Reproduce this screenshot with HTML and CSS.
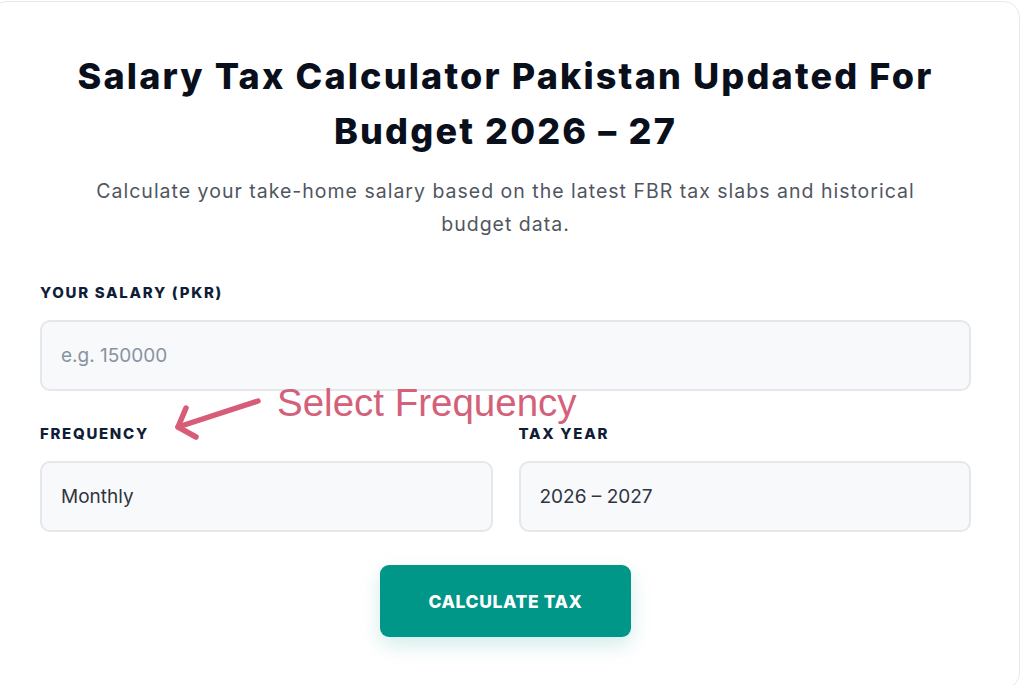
FILE: index.html
```html
<!DOCTYPE html>
<html lang="en">
<head>
<meta charset="utf-8">
<title>Salary Tax Calculator Pakistan</title>
<link rel="stylesheet" href="styles.css">
</head>
<body>
<main class="card">
  <h1 class="title">Salary Tax Calculator Pakistan Updated For Budget 2026 – 27</h1>
  <p class="subtitle">Calculate your take-home salary based on the latest FBR tax slabs and historical budget data.</p>

  <div class="field">
    <label class="label" for="salary">YOUR SALARY (PKR)</label>
    <input class="control" id="salary" type="text" placeholder="e.g. 150000">
  </div>

  <div class="row">
    <div class="field">
      <label class="label" for="freq">FREQUENCY</label>
      <select class="control" id="freq">
        <option>Monthly</option>
        <option>Yearly</option>
      </select>
    </div>
    <div class="field">
      <label class="label" for="year">TAX YEAR</label>
      <select class="control" id="year">
        <option>2026 – 2027</option>
      </select>
    </div>
    <svg class="arrow" width="95" height="50" viewBox="0 0 95 50" aria-hidden="true">
      <path d="M88 7 L8 33" fill="none" stroke="#d65c78" stroke-width="5.5" stroke-linecap="round"/>
      <path d="M16 14 L8 33 L26 43" fill="none" stroke="#d65c78" stroke-width="5.5" stroke-linecap="round" stroke-linejoin="round"/>
    </svg>
    <span class="annotation-text">Select Frequency</span>
  </div>

  <div class="actions">
    <button class="btn" type="button">CALCULATE TAX</button>
  </div>
</main>
</body>
</html>
```

FILE: styles.css
```css
* { box-sizing: border-box; }

html, body {
  margin: 0;
  padding: 0;
  background: #ffffff;
  overflow: hidden;
}

body {
  height: 685px;
  font-family: Inter, "Noto Sans", sans-serif;
  color: #0b1220;
}

.card {
  margin: 1px 0 0 -9px;
  width: 1029px;
  height: 688px;
  padding: 47px 48px 0;
  background: #ffffff;
  border: 1px solid #e6e8eb;
  border-radius: 16px;
  overflow: hidden;
}

.title {
  margin: 0 auto;
  max-width: 900px;
  font-size: 36px;
  line-height: 55px;
  font-weight: 800;
  text-align: center;
  color: #0a0f1c;
  letter-spacing: 2.15px;
}

.subtitle {
  margin: 16px auto 0;
  max-width: 830px;
  font-size: 19.5px;
  line-height: 33px;
  font-weight: 400;
  text-align: center;
  color: #50565f;
  letter-spacing: 1px;
}

.field {
  display: flex;
  flex-direction: column;
}

.subtitle + .field {
  margin-top: 42px;
}

.label {
  font-size: 15px;
  line-height: 20px;
  font-weight: 800;
  letter-spacing: 1.7px;
  color: #0f1d36;
  margin-bottom: 17px;
}

.control {
  appearance: none;
  -webkit-appearance: none;
  width: 100%;
  height: 71px;
  padding: 0 19px;
  border: 2px solid #e5e7ea;
  border-radius: 10px;
  background: #f8f9fa;
  font-family: Inter, "Noto Sans", sans-serif;
  font-size: 19px;
  color: #2f3440;
  outline: none;
}

.control::placeholder {
  color: #8792a2;
}

.row {
  position: relative;
  margin-top: 33px;
  display: grid;
  grid-template-columns: 1fr 1fr;
  column-gap: 26px;
}

.arrow {
  position: absolute;
  left: 130px;
  top: -30px;
}

.annotation-text {
  position: absolute;
  left: 237px;
  top: -38px;
  font-family: "Liberation Sans", Arial, sans-serif;
  font-size: 38.5px;
  line-height: 34px;
  color: #d4607a;
  white-space: nowrap;
}

.actions {
  display: flex;
  justify-content: center;
  margin-top: 33px;
}

.btn {
  width: 251px;
  height: 72px;
  border: 0;
  border-radius: 9px;
  background: #009688;
  color: #ffffff;
  font-family: Inter, "Noto Sans", sans-serif;
  font-size: 17.5px;
  font-weight: 800;
  letter-spacing: 0.6px;
  box-shadow: 0 8px 20px rgba(0, 150, 136, 0.18);
  cursor: pointer;
}
```
